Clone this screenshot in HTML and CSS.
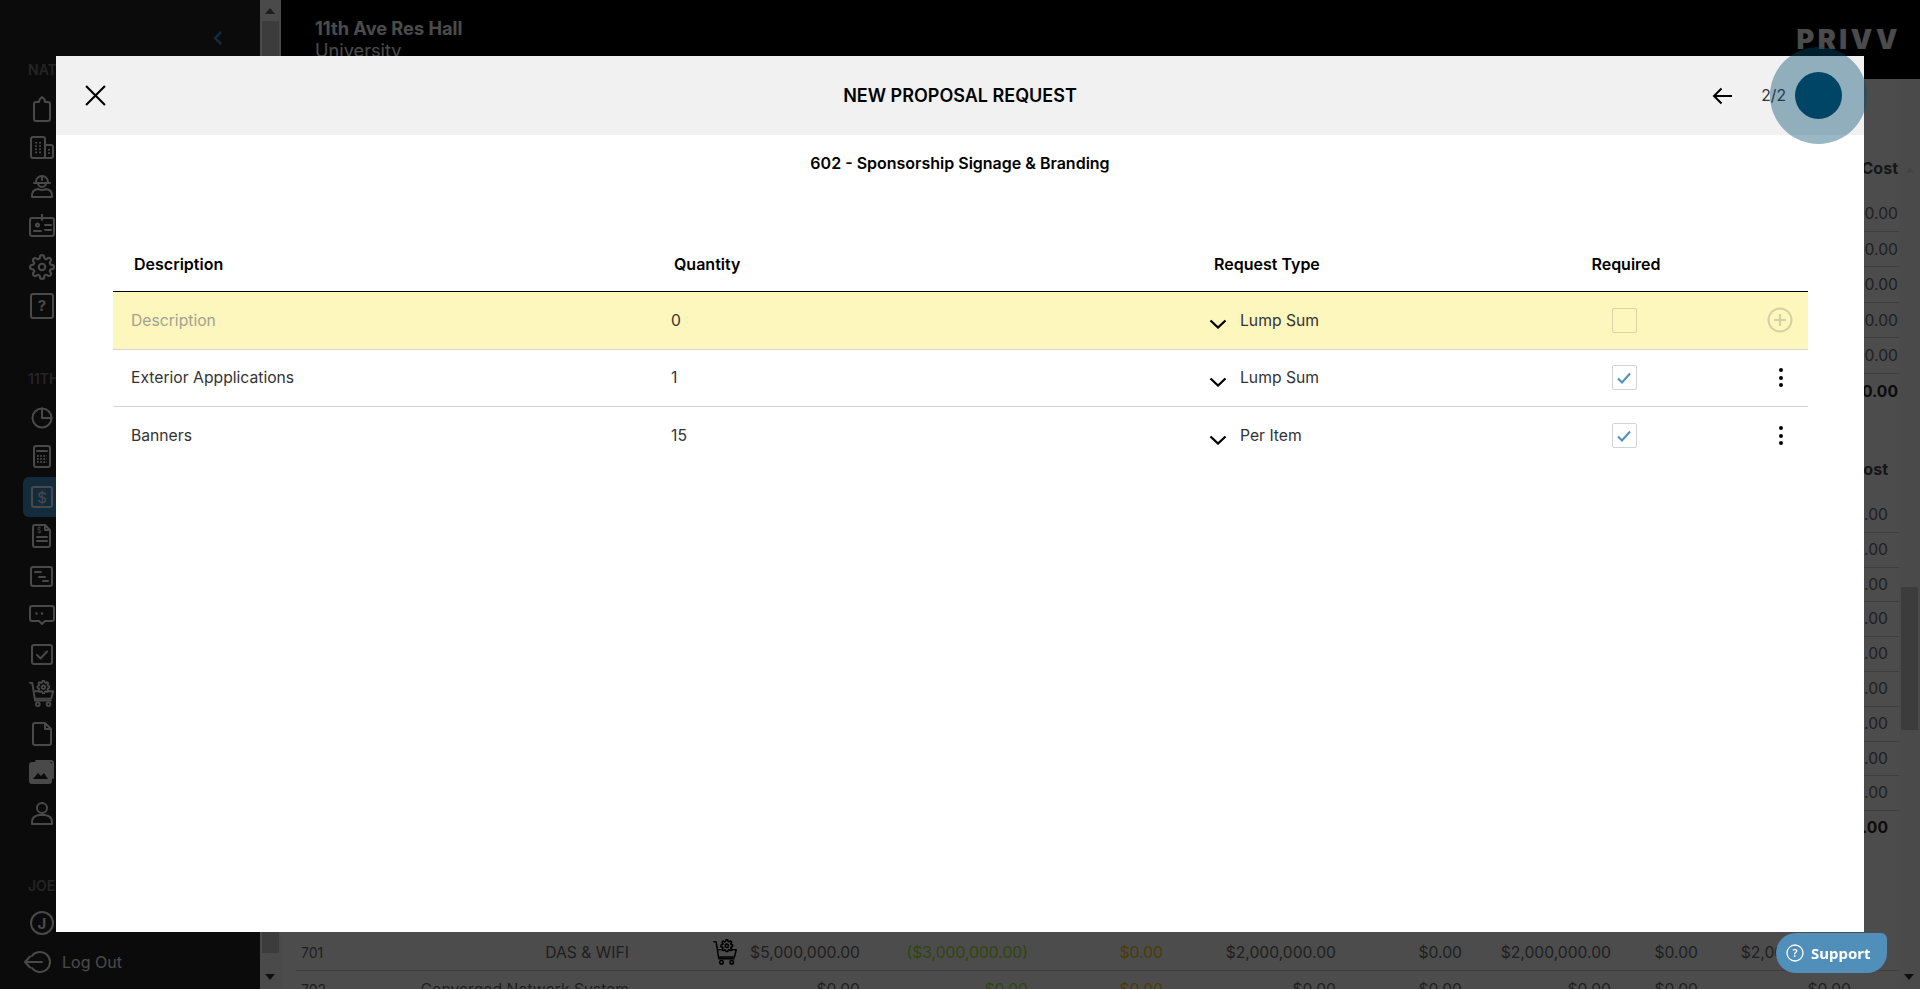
FILE: index.html
```html
<!DOCTYPE html>
<html lang="en">
  <head>
    <meta charset="UTF-8" />
    <meta name="viewport" content="width=device-width, initial-scale=1.0" />
    <title>New proposal request</title>
    <link rel="stylesheet" href="styles.css">
  </head>
  <body>
    <svg class="icon-defs" aria-hidden="true">
      <symbol id="gear" viewBox="0 0 24 24">
        <circle cx="12" cy="12" r="3" />
        <path d="M19.4 15a1.65 1.65 0 0 0 .33 1.82l.06.06a2 2 0 0 1 0 2.83 2 2 0 0 1-2.83 0l-.06-.06a1.65 1.65 0 0 0-1.82-.33 1.65 1.65 0 0 0-1 1.51V21a2 2 0 0 1-2 2 2 2 0 0 1-2-2v-.09A1.65 1.65 0 0 0 9 19.4a1.65 1.65 0 0 0-1.82.33l-.06.06a2 2 0 0 1-2.83 0 2 2 0 0 1 0-2.83l.06-.06a1.65 1.65 0 0 0 .33-1.82 1.65 1.65 0 0 0-1.51-1H3a2 2 0 0 1-2-2 2 2 0 0 1 2-2h.09A1.65 1.65 0 0 0 4.6 9a1.65 1.65 0 0 0-.33-1.82l-.06-.06a2 2 0 0 1 0-2.83 2 2 0 0 1 2.83 0l.06.06a1.65 1.65 0 0 0 1.82.33H9a1.65 1.65 0 0 0 1-1.51V3a2 2 0 0 1 2-2 2 2 0 0 1 2 2v.09a1.65 1.65 0 0 0 1 1.51 1.65 1.65 0 0 0 1.82-.33l.06-.06a2 2 0 0 1 2.83 0 2 2 0 0 1 0 2.83l-.06.06a1.65 1.65 0 0 0-.33 1.82V9a1.65 1.65 0 0 0 1.51 1H21a2 2 0 0 1 2 2 2 2 0 0 1-2 2h-.09a1.65 1.65 0 0 0-1.51 1z" />
      </symbol>
      <symbol id="cart" viewBox="0 0 28 30">
        <path d="M1 3h2.500l3 19h17" />
        <path d="M6 12h3M20 12h6l-2 8H6.500" />
        <circle cx="9.500" cy="26" r="2" />
        <circle cx="21" cy="26" r="2" />
        <svg x="8" y="0" width="15" height="15" viewBox="0 0 24 24" stroke-width="3"><use href="#gear" /></svg>
      </symbol>
    </svg>

    <div class="app">
      <aside class="sidebar">
        <div class="collapse">
          <svg viewBox="0 0 10 16" width="10" height="16"><path d="M8 2 2 8l6 6" /></svg>
        </div>

        <div class="nav-label">NATIONAL</div>
        <nav class="nav-list">
          <a class="nav-item"><svg viewBox="0 0 26 26"><path d="M5 8q0-2 2-2h3q0-3 3-5 3 2 3 5h3q2 0 2 2v15q0 2-2 2H7q-2 0-2-2z" /></svg></a>
          <a class="nav-item"><svg viewBox="0 0 26 26"><rect x="2" y="2" width="14" height="21" rx="2" /><path d="M16 10h6q2 0 2 2v9q0 2-2 2h-6" /><path class="dots" d="M7 7v12M11 7v12M20 14v5" /></svg></a>
          <a class="nav-item"><svg viewBox="0 3 26 26"><path d="M7 10a6 6 0 0 1 12 0M5 11h16M9 11a4 4 0 0 0 8 0M13 4v4" /><path d="M3 25v-2q0-5 6-6 4 2 8 0 6 1 6 6v2z" /></svg></a>
          <a class="nav-item"><svg viewBox="0 2 26 26"><rect x="1" y="6" width="24" height="18" rx="2" /><path d="M13 2v6" /><circle cx="8.500" cy="13" r="1.500" /><path d="M5 19h7M16 13h6M16 18h6" /></svg></a>
          <a class="nav-item"><svg viewBox="0 0 26 26"><use href="#gear" /></svg></a>
          <a class="nav-item"><svg viewBox="0 0 26 26"><rect x="2" y="1" width="22" height="24" rx="2" /><text x="13" y="18" class="icon-text">?</text></svg></a>
        </nav>

        <div class="nav-label nav-label-second">11TH AVE RES HALL</div>
        <nav class="nav-list">
          <a class="nav-item"><svg viewBox="0 0 26 26"><circle cx="13" cy="13" r="9.500" /><path d="M13 3.500V13h9.500" /></svg></a>
          <a class="nav-item"><svg viewBox="0 0 26 26"><rect x="5" y="2" width="16" height="21" rx="2" /><path d="M8 7h10" /><path class="dots" d="M8 12h10M8 15h10M8 18h10" /></svg></a>
          <a class="nav-item active"><svg viewBox="0 0 26 26"><rect x="3" y="3" width="20" height="20" rx="2" /><text x="13" y="18.500" class="icon-text icon-text-thin">$</text></svg></a>
          <a class="nav-item"><svg viewBox="0 0 26 26"><path d="M6 2h10l5 5v15q0 2-2 2H6q-2 0-2-2V4q0-2 2-2zM16 2v5h5" /><path d="M8 14h10M8 18h10" /><text x="8" y="10" class="icon-text-small">$</text></svg></a>
          <a class="nav-item"><svg viewBox="0 0 26 26"><rect x="2" y="4" width="21" height="19" rx="2" /><path d="M6 9h6M10 14h6M14 18h5" /></svg></a>
          <a class="nav-item"><svg viewBox="0 0 26 26"><path d="M3 4h20q2 0 2 2v11q0 2-2 2h-7l-3 3-3-3H3q-2 0-2-2V6q0-2 2-2z" /><path class="dots-round" d="M7.500 11.500h11" /></svg></a>
          <a class="nav-item"><svg viewBox="0 0 26 26"><rect x="3" y="3" width="20" height="19" rx="2" /><path d="m8 13 3.500 3.500L18 9.500" /></svg></a>
          <a class="nav-item"><svg viewBox="0 0 28 30" class="nav-cart"><use href="#cart" /></svg></a>
          <a class="nav-item"><svg viewBox="0 0 26 26"><path d="M6 2h10l6 6v14q0 2-2 2H6q-2 0-2-2V4q0-2 2-2zM16 2v6h6" /></svg></a>
          <a class="nav-item"><svg viewBox="0 2 26 26"><path d="M7 3h15q2 0 2 2v15" /><rect class="solid" x="1" y="5" width="21" height="20" rx="2" /><path class="cut" d="m4 21 5-6 3 3 3-3 4 6z" /></svg></a>
          <a class="nav-item"><svg viewBox="0 0 26 26"><circle cx="13" cy="8" r="5" /><path d="M3 24v-2q0-6 7-7h6q7 1 7 7v2z" /></svg></a>
        </nav>

        <div class="nav-label nav-label-third">JOE SMITH</div>
        <a class="nav-item nav-item-user"><svg viewBox="0 0 26 26"><circle cx="13" cy="13" r="11" /><text x="13" y="18.500" class="icon-text">J</text></svg></a>
        <a class="logout">
          <svg viewBox="0 0 28 24" width="28" height="24"><path d="M8 6a10 10 0 1 1 0 12M1 12h17M6 6.500 1 12l5 5.500" /></svg>
          Log Out
        </a>
      </aside>

      <div class="scrollbar scrollbar-side">
        <span class="arrow-up"></span>
        <span class="thumb"></span>
        <span class="arrow-down"></span>
      </div>

      <main class="main">
        <header class="topbar">
          <div>
            <div class="project-name">11th Ave Res Hall</div>
            <div class="project-type">University</div>
          </div>
          <div class="logo">PRIVV</div>
        </header>

        <div class="content">
          <div class="sheet">
            <section class="cost-block">
              <div class="cost-head">Cost <span class="sort-up"></span></div>
              <div class="cost-row">$1,500.00</div>
              <div class="cost-row">$2,500.00</div>
              <div class="cost-row">$1,500.00</div>
              <div class="cost-row">$3,750.00</div>
              <div class="cost-row">$1,250.00</div>
              <div class="cost-row cost-total">$10,500.00</div>
            </section>

            <section class="cost-block cost-block-second">
              <div class="cost-head">Cost</div>
              <div class="cost-row">$0.00</div>
              <div class="cost-row">$0.00</div>
              <div class="cost-row">$0.00</div>
              <div class="cost-row">$0.00</div>
              <div class="cost-row">$0.00</div>
              <div class="cost-row">$0.00</div>
              <div class="cost-row">$0.00</div>
              <div class="cost-row">$0.00</div>
              <div class="cost-row">$0.00</div>
              <div class="cost-row cost-total">$0.00</div>
            </section>

            <section class="budget">
              <div class="budget-row">
                <span class="code">701</span>
                <span>DAS &amp; WIFI</span>
                <span class="cart-cell"><svg viewBox="0 0 28 30" width="25" height="27"><use href="#cart" /></svg></span>
                <span>$5,000,000.00</span>
                <span class="green">($3,000,000.00)</span>
                <span class="amber">$0.00</span>
                <span>$2,000,000.00</span>
                <span>$0.00</span>
                <span>$2,000,000.00</span>
                <span>$0.00</span>
                <span>$2,000,000.00</span>
              </div>
              <div class="budget-row">
                <span class="code">702</span>
                <span>Converged Network System</span>
                <span></span>
                <span>$0.00</span>
                <span class="green">$0.00</span>
                <span class="amber">$0.00</span>
                <span>$0.00</span>
                <span>$0.00</span>
                <span>$0.00</span>
                <span>$0.00</span>
                <span>$0.00</span>
              </div>
            </section>
          </div>
          <div class="scrollbar scrollbar-main">
            <span class="thumb"></span>
            <span class="arrow-down"></span>
          </div>
        </div>
      </main>
    </div>

    <div class="overlay"></div>

    <div class="modal">
      <div class="modal-header">
        <svg class="close-icon" viewBox="0 0 20 20" width="21" height="21"><path d="M1 1l18 18M19 1 1 19" /></svg>
        <h1 class="modal-title">NEW PROPOSAL REQUEST</h1>
        <div class="modal-step">
          <svg class="back-icon" viewBox="0 0 20 18" width="20" height="18"><path d="M20 9H2M9.500 1.500 2 9l7.500 7.500" /></svg>
          <span>2/2</span>
        </div>
      </div>

      <h2 class="modal-subtitle">602 - Sponsorship Signage &amp; Branding</h2>

      <div class="request-table">
        <div class="table-row table-head">
          <div class="cell">Description</div>
          <div class="cell">Quantity</div>
          <div class="cell">Request Type</div>
          <div class="cell cell-center">Required</div>
          <div class="cell"></div>
        </div>

        <div class="table-row row-new">
          <div class="cell placeholder">Description</div>
          <div class="cell">0</div>
          <div class="cell cell-type">
            <svg class="chevron" viewBox="0 0 18 10" width="18" height="10"><path d="M1.500 1.500 9 8.500l7.500-7" /></svg>
            Lump Sum
          </div>
          <div class="cell cell-center"><span class="checkbox checkbox-empty"></span></div>
          <div class="cell cell-action">
            <svg class="add-icon" viewBox="0 0 26 26" width="26" height="26"><circle cx="13" cy="13" r="11.500" /><path d="M13 7v12M7 13h12" /></svg>
          </div>
        </div>

        <div class="table-row">
          <div class="cell">Exterior Appplications</div>
          <div class="cell">1</div>
          <div class="cell cell-type">
            <svg class="chevron" viewBox="0 0 18 10" width="18" height="10"><path d="M1.500 1.500 9 8.500l7.500-7" /></svg>
            Lump Sum
          </div>
          <div class="cell cell-center">
            <span class="checkbox"><svg viewBox="0 0 14 12" width="14" height="12"><path d="m1 6.500 4 4 8-9" /></svg></span>
          </div>
          <div class="cell cell-action"><span class="kebab"><i></i><i></i><i></i></span></div>
        </div>

        <div class="table-row">
          <div class="cell">Banners</div>
          <div class="cell">15</div>
          <div class="cell cell-type">
            <svg class="chevron" viewBox="0 0 18 10" width="18" height="10"><path d="M1.500 1.500 9 8.500l7.500-7" /></svg>
            Per Item
          </div>
          <div class="cell cell-center">
            <span class="checkbox"><svg viewBox="0 0 14 12" width="14" height="12"><path d="m1 6.500 4 4 8-9" /></svg></span>
          </div>
          <div class="cell cell-action"><span class="kebab"><i></i><i></i><i></i></span></div>
        </div>
      </div>
    </div>

    <div class="step-highlight"><span></span></div>

    <a class="support">
      <svg viewBox="0 0 18 18" width="18" height="18"><circle cx="9" cy="9" r="8" /><text x="9" y="13" class="support-mark">?</text></svg>
      Support
    </a>
  </body>
</html>
```

FILE: styles.css
```css
* {
  box-sizing: border-box;
}

html,
body {
  height: 100%;
  margin: 0;
  overflow: hidden;
}

body {
  font-family: Inter, "Liberation Sans", sans-serif;
  font-size: 15.700px;
  color: #333;
  background: #fff;
}

.icon-defs {
  display: none;
}

.app {
  display: flex;
  height: 100vh;
}

/* sidebar */
.sidebar {
  flex: 0 0 260px;
  display: flex;
  flex-direction: column;
  background: #252525;
  color: #f5f5f5;
  overflow: hidden;
}

.collapse {
  height: 24px;
  margin: 30px 0 0 213px;
  color: #3c93cf;
}
.collapse svg {
  fill: none;
  stroke: currentColor;
  stroke-width: 2.500;
}

.nav-label {
  margin: 8px 0 0 28px;
  height: 16px;
  line-height: 16px;
  font-size: 14px;
  font-weight: 600;
  color: #7a7a7a;
  white-space: nowrap;
}
.nav-label-second {
  margin-top: 45px;
}
.nav-label-third {
  margin-top: 45px;
}

.nav-list {
  display: flex;
  flex-direction: column;
  margin-top: 11px;
}

.nav-item {
  display: flex;
  align-items: center;
  flex: 0 0 39.500px;
  height: 39.500px;
  margin-left: 23px;
  padding-left: 6px;
  border-radius: 6px;
}
.nav-item-user {
  margin-top: 10px;
}
.nav-item svg,
.logout svg {
  fill: none;
  stroke: currentColor;
  stroke-width: 2;
  stroke-linecap: round;
  stroke-linejoin: round;
}
.nav-item svg {
  width: 26px;
  height: 26px;
}
.nav-item .nav-cart {
  width: 26px;
  height: 28px;
}
.nav-item.active {
  background: #3c93cf;
}
.nav-item .dots {
  stroke-width: 2;
  stroke-linecap: butt;
  stroke-dasharray: 1.600 1.600;
}
.nav-item .dots-round {
  stroke-width: 2.500;
  stroke-dasharray: 0 5.500;
}
.nav-item .solid {
  fill: currentColor;
}
.nav-item .cut {
  fill: #252525;
  stroke: none;
}
.nav-item .icon-text {
  fill: currentColor;
  stroke: none;
  font-size: 15px;
  font-weight: 700;
  text-anchor: middle;
}
.nav-item .icon-text-thin {
  font-weight: 400;
}
.nav-item .icon-text-small {
  fill: currentColor;
  stroke: none;
  font-size: 7px;
}

.logout {
  display: flex;
  align-items: center;
  gap: 10px;
  margin: 4px 0 0 24px;
  height: 30px;
  font-size: 16px;
}

/* scrollbars */
.scrollbar {
  position: relative;
  display: flex;
  flex-direction: column;
  align-items: center;
  background: #f8f8f8;
}
.scrollbar-side {
  flex: 0 0 21px;
}
.scrollbar-side .thumb {
  width: 17px;
  height: 932px;
  margin-top: 21px;
  background: #c8c8c8;
}
.scrollbar-main {
  flex: 0 0 21px;
}
.scrollbar-main .thumb {
  width: 17px;
  height: 143px;
  margin-top: 508px;
  background: #c8c8c8;
}
.arrow-up,
.arrow-down {
  position: absolute;
  left: 5px;
  width: 0;
  height: 0;
  border-left: 5px solid transparent;
  border-right: 5px solid transparent;
}
.arrow-up {
  top: 8px;
  border-bottom: 6px solid #666;
}
.arrow-down {
  bottom: 9px;
  border-top: 6px solid #333;
}

/* page behind the modal */
.main {
  flex: 1;
  min-width: 0;
  display: flex;
  flex-direction: column;
}

.topbar {
  flex: 0 0 79px;
  display: flex;
  justify-content: space-between;
  padding: 18px 19px 0 34px;
  background: #000;
  color: #fafafa;
}
.project-name {
  font-size: 18.200px;
  font-weight: 700;
  line-height: 21px;
}
.project-type {
  font-size: 18.200px;
  line-height: 22px;
}
.logo {
  margin-top: 6px;
  font-size: 27px;
  line-height: 32px;
  font-weight: 900;
  letter-spacing: 3.500px;
}

.content {
  flex: 1;
  min-height: 0;
  display: flex;
}

.sheet {
  flex: 1;
  min-width: 0;
  padding: 66px 0 0 15px;
  color: #6a6a6a;
}

.cost-head {
  position: relative;
  height: 51px;
  padding-bottom: 6px;
  display: flex;
  align-items: center;
  justify-content: flex-end;
  padding-right: 1px;
  font-size: 16px;
  font-weight: 700;
  color: #4a4a4a;
}
.sort-up {
  position: absolute;
  z-index: 1;
  right: -15px;
  top: 23px;
  width: 0;
  height: 0;
  border-left: 4px solid transparent;
  border-right: 4px solid transparent;
  border-bottom: 5px solid #444;
}

.cost-row {
  height: 35.600px;
  line-height: 35px;
  padding-right: 1px;
  text-align: right;
  border-bottom: 1px solid #d0d0d0;
}
.cost-row.cost-total {
  font-weight: 700;
  color: #2b2b2b;
  border-bottom: none;
}

.cost-block-second {
  margin-top: 37.400px;
}
.cost-block-second .cost-head {
  padding-right: 11px;
}
.cost-block-second .cost-row {
  height: 34.800px;
  line-height: 34px;
  padding-right: 11px;
}

.budget {
  margin-top: 89px;
}
.budget-row {
  display: grid;
  grid-template-columns: 100px 233px 109px 122px 168px 135px 173px 126px 149px 87px 153px;
  align-items: center;
  height: 36.500px;
  border-bottom: 1px solid #d0d0d0;
  white-space: nowrap;
}
.budget-row span {
  text-align: right;
}
.budget-row .code {
  padding-left: 5px;
  text-align: left;
  font-size: 14px;
}
.budget-row .cart-cell {
  display: flex;
  justify-content: flex-end;
  color: #000;
}
.cart-cell svg {
  fill: none;
  stroke: currentColor;
  stroke-width: 1.700;
  stroke-linecap: round;
  stroke-linejoin: round;
}
.green {
  color: #a6e62f;
}
.amber {
  color: #f5c518;
}

.overlay {
  position: fixed;
  inset: 0;
  background: rgba(0, 0, 0, 0.7);
}

/* modal */
.modal {
  position: fixed;
  left: 56px;
  top: 56px;
  width: 1808px;
  height: 876px;
  background: #fff;
  color: #333;
}

.modal-header {
  display: flex;
  align-items: center;
  justify-content: space-between;
  height: 79px;
  padding-left: 29px;
  background: #f1f1f1;
}
.modal-title {
  position: absolute;
  left: 0;
  right: 0;
  margin: 0;
  font-size: 18px;
  font-weight: 600;
  text-align: center;
  color: #000;
}
.close-icon,
.back-icon {
  fill: none;
  stroke: #000;
  stroke-width: 2;
}
.modal-step {
  display: flex;
  align-items: center;
  gap: 29px;
  margin-right: 78px;
}

.modal-subtitle {
  margin: 18px 0 0;
  font-size: 16px;
  line-height: 20px;
  font-weight: 600;
  text-align: center;
  color: #000;
}

.request-table {
  margin: 63px 56px 0 57px;
}

.table-row {
  display: grid;
  grid-template-columns: 540px 540px 357px 150px 1fr;
  align-items: center;
  height: 57.500px;
  border-bottom: 1px solid #d4d4d4;
}
.table-row:last-child {
  border-bottom: none;
}
.table-head {
  height: 56px;
  border-bottom: 1px solid #000;
  font-size: 16px;
  font-weight: 600;
  color: #000;
}
.table-head .cell {
  padding-left: 21px;
}
.table-head .cell-center {
  padding-left: 2px;
}

.cell {
  padding-left: 18px;
}
.cell-center {
  padding-left: 0;
  display: flex;
  justify-content: center;
}
.cell-type {
  display: flex;
  align-items: center;
  gap: 13px;
  padding-left: 16px;
}
.cell-action {
  display: flex;
  justify-content: flex-end;
  padding-right: 15px;
}

.row-new {
  background: #fdf6bd;
}
.placeholder {
  color: #a3a190;
}

.chevron {
  margin-top: 8px;
  fill: none;
  stroke: #000;
  stroke-width: 2.300;
}

.checkbox {
  display: flex;
  align-items: center;
  justify-content: center;
  width: 25px;
  height: 25px;
  margin-left: -2px;
  background: #fff;
  border: 1px solid #d4d4d4;
  border-radius: 2px;
}
.checkbox-empty {
  background: transparent;
  border-color: #d8d4a8;
}
.checkbox svg {
  fill: none;
  stroke: #4f8fba;
  stroke-width: 2;
}

.add-icon {
  fill: none;
  stroke: #d5d2a2;
  stroke-width: 2;
}

.kebab {
  display: flex;
  flex-direction: column;
  gap: 3.500px;
  margin-right: 10px;
}
.kebab i {
  width: 4px;
  height: 4px;
  border-radius: 50%;
  background: #000;
}

/* onboarding dot on top of the modal */
.step-highlight {
  position: fixed;
  left: 1769.500px;
  top: 46.500px;
  display: flex;
  align-items: center;
  justify-content: center;
  width: 97px;
  height: 97px;
  border-radius: 50%;
  background: rgba(0, 74, 110, 0.4);
}
.step-highlight span {
  width: 47px;
  height: 47px;
  border-radius: 50%;
  background: #004566;
}

.support {
  position: fixed;
  left: 1776px;
  top: 933px;
  display: flex;
  align-items: center;
  gap: 7px;
  width: 111px;
  height: 40px;
  padding-left: 10px;
  border-radius: 20px 6px 20px 20px;
  background: #4f8fba;
  color: #fff;
  font-family: "Noto Sans", sans-serif;
  font-size: 15px;
  font-weight: 700;
}
.support svg {
  fill: none;
  stroke: #fff;
  stroke-width: 1.300;
}
.support .support-mark {
  fill: #fff;
  stroke: none;
  font-size: 11px;
  font-weight: 600;
  text-anchor: middle;
}
```
